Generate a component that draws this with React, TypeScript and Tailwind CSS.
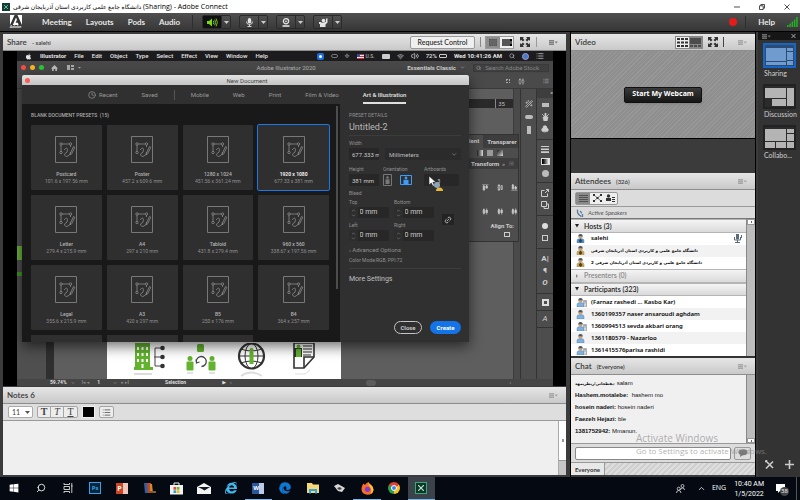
import type { ReactNode } from 'react'
import { clsx } from 'clsx'
import {
  AlignCenterHorizontal,
  AlignEndHorizontal,
  AlignStartHorizontal,
  AlignHorizontalDistributeCenter,
  ChevronDown,
  ChevronUp,
  Clock,
  Club,
  Link2,
  List,
  Search,
  Wand2,
  Wifi,
  Volume2,
} from 'lucide-react'
import { FaApple, FaEdge, FaInternetExplorer, FaWindows } from 'react-icons/fa'

type Preset = { name: string; size: string; selected?: boolean }

const PRESETS: Preset[] = [
  { name: 'Postcard', size: '101.6 x 197.56 mm' },
  { name: 'Poster', size: '457.2 x 609.6 mm' },
  { name: '1280 x 1024', size: '451.56 x 361.24 mm' },
  { name: '1920 x 1080', size: '677.33 x 381 mm', selected: true },
  { name: 'Letter', size: '279.4 x 215.9 mm' },
  { name: 'A4', size: '297 x 210 mm' },
  { name: 'Tabloid', size: '431.8 x 279.4 mm' },
  { name: '960 x 560', size: '338.67 x 197.56 mm' },
  { name: 'Legal', size: '355.6 x 215.9 mm' },
  { name: 'A3', size: '420 x 297 mm' },
  { name: 'B5', size: '250 x 176 mm' },
  { name: 'B4', size: '364 x 257 mm' },
]

const HOSTS = [
  { name: 'salehi', mic: true },
  { name: 'دانشگاه جامع علمی و کاربردی استان آذربایجان شرقی', rtl: true },
  { name: 'دانشگاه جامع علمی و کاربردی استان آذربایجان شرقی 2', rtl: true },
]

const PARTICIPANTS = [
  { name: '(Farnaz rashedi ... Kasbo Kar)', phone: true },
  { name: '1360199357 naser ansaroudi aghdam', phone: false },
  { name: '1360994513 sevda akbari orang', phone: true },
  { name: '1361180579 - Nazarloo', phone: false },
  { name: '1361415576parisa rashidi', phone: true },
]

const CHAT = [
  { from: 'یقطجانی/ریطریمهد:', text: 'salam', rtl: true },
  { from: 'Hashem.motalebe:', text: ' hashem mo' },
  { from: 'hosein naderi:', text: 'hosein naderi' },
  { from: 'Faezeh Hejazi:', text: 'ble' },
  { from: '1381752942:', text: 'Mmanun.' },
]

/* ---------- small shared pieces ---------- */

function PodMenu({ faint }: { faint?: boolean }) {
  return (
    <button aria-label="Pod options" className={clsx('shrink-0', faint ? 'opacity-50' : 'opacity-90')}>
      <svg width="9" height="5" viewBox="0 0 9 5" fill="#777">
        <path d="M0 0h5v5H0z" opacity=".6" />
        <path d="M0 0h5v1H0zM0 2h5v1H0zM0 4h5v1H0zM5.500 1.500h3.500L7.200 3.500z" />
      </svg>
    </button>
  )
}

function PodHeader({ title, note, children, faint }: { title: string; note?: string; children?: ReactNode; faint?: boolean }) {
  return (
    <header className="flex h-[17px] shrink-0 items-center border-b border-[#8d8d8d] bg-linear-to-b from-[#e6e6e6] to-[#c9c9c9] pr-2 pl-1">
      <h2 className="text-[8px] font-semibold text-[#3a3a3a]">{title}</h2>
      {note && <span className="ml-[5px] text-[6px] font-semibold text-[#3a3a3a]">{note}</span>}
      <div className="ml-auto flex items-center">
        {children}
        <PodMenu faint={faint} />
      </div>
    </header>
  )
}

function FullscreenIcon() {
  return (
    <svg width="10" height="10" viewBox="0 0 10 10" fill="#333">
      <path d="M0 0h4L2.8 1.2 4.5 2.9 2.9 4.5 1.2 2.8 0 4zM10 0v4L8.800 2.8 7.100 4.5 5.500 2.900 7.200 1.200 6 0zM0 10V6l1.200 1.200L2.900 5.500 4.500 7.100 2.800 8.800 4 10zM10 10H6l1.200-1.200L5.500 7.100 7.100 5.500 8.800 7.200 10 6z" />
    </svg>
  )
}

function Person({ color, badge, phone }: { color: string; badge?: string; phone?: boolean }) {
  return (
    <svg width="11" height="9" viewBox="0 0 11 9" className="shrink-0">
      <circle cx="4.500" cy="2.500" r="2.200" fill="#c9a37c" />
      <path d="M2.300 2.200a2.200 2.200 0 0 1 4.400 0z" fill="#4c5866" />
      <path d="M1 9V6.500Q1 5 3 4.800h3Q8 5 8 6.500V9z" fill={color} stroke="#4a6d93" strokeWidth=".4" />
      {badge && <path d="M4.500 4.500 6.500 7 4.500 9 2.500 7z" fill={badge} />}
      {phone && <path d="M7.500 2.500h3V9h-3zM8 3.500h2M8 5h2" fill="#cfd6dd" stroke="#6c7885" strokeWidth=".5" />}
    </svg>
  )
}

/* ---------- Connect title bar and menu ---------- */

function TitleBar() {
  return (
    <div className="flex h-[13px] shrink-0 items-center bg-white pl-0.5 text-[7px] text-black">
      <span className="grid size-2 place-items-center bg-[#103d33]">
        <svg width="6" height="6" viewBox="0 0 6 6" stroke="#8fd0b6" strokeWidth=".8">
          <path d="M1 1l4 4M5 1L1 5" />
        </svg>
      </span>
      <h1 className="ml-[3px] whitespace-nowrap">
        <span className="text-[6px]">دانشگاه جامع علمی کاربردی استان آذربایجان شرقی</span>
        <span className="font-['Open_Sans',sans-serif]"> (Sharing) - Adobe Connect</span>
      </h1>
      <div className="ml-auto flex gap-[19px] pr-[10px]">
        <button aria-label="Minimize">
          <svg width="6" height="6" viewBox="0 0 6 6" stroke="#222" strokeWidth=".8"><path d="M0 3h6" /></svg>
        </button>
        <button aria-label="Restore">
          <svg width="6" height="6" viewBox="0 0 6 6" fill="none" stroke="#222" strokeWidth=".8"><path d="M.5 1.800h3.700v3.700H.5zM1.800 1.800V.5h3.700v3.700H4.200" /></svg>
        </button>
        <button aria-label="Close window">
          <svg width="6" height="6" viewBox="0 0 6 6" stroke="#222" strokeWidth=".8"><path d="M.5.5l5 5M5.500.5l-5 5" /></svg>
        </button>
      </div>
    </div>
  )
}

function DeviceButton({ label, active, children }: { label: string; active?: boolean; children: ReactNode }) {
  return (
    <div className="flex h-[14px] rounded-xs border border-[#2b2b2b] bg-linear-to-b from-[#505050] to-[#3a3a3a]">
      <button aria-label={label} className={clsx('grid w-[18px] place-items-center', active && 'bg-[#111]')}>
        {children}
      </button>
      <button aria-label={`${label} options`} className="grid w-[9px] place-items-center border-l border-[#2b2b2b]">
        <svg width="5" height="3" viewBox="0 0 5 3" fill="#ccc"><path d="M0 0h5L2.500 3z" /></svg>
      </button>
    </div>
  )
}

function ConnectMenu() {
  return (
    <nav className="flex h-[19px] shrink-0 items-center border-b border-black bg-linear-to-b from-[#505050] to-[#363636] pr-0.5 text-[8px] font-bold text-[#e6e6e6]">
      <div className="flex w-[31px] flex-col items-center">
        <svg width="12" height="10" viewBox="0 0 12 10">
          <path d="M0 0h12v10H0z" fill="#fff" />
          <path d="M4.600 0h2.800L12 10H8.700L7.800 7.800H5.600L7 4.800l-1-2.400L2.800 10H0z" fill="#333" />
        </svg>
        <span className="text-[4px] leading-[4px]">Adobe</span>
      </div>
      <div className="flex gap-[14px] pl-[11px]">
        <button>Meeting</button>
        <button>Layouts</button>
        <button>Pods</button>
        <button>Audio</button>
      </div>
      <div className="ml-3 flex gap-2 border-l border-[#2e2e2e] pl-[9px]">
        <DeviceButton label="Speaker" active>
          <svg width="11" height="9" viewBox="0 0 11 9" fill="none" stroke="#7bd41f" strokeWidth=".9">
            <path d="M0 3h2l3-2.500v8L2 6H0z" fill="#7bd41f" stroke="none" />
            <path d="M6.300 2.800q1 1.700 0 3.400M7.700 1.700q1.800 2.800 0 5.600M9.100.6q2.600 3.900 0 7.800" />
          </svg>
        </DeviceButton>
        <DeviceButton label="Microphone">
          <svg width="7" height="9" viewBox="0 0 7 9" fill="#e4e4e4">
            <rect x="1.800" y="0" width="3.400" height="5.500" rx="1.700" />
            <path d="M.5 3.500Q.5 6.500 3.500 6.500T6.500 3.500M3.500 6.500V8M1.500 8.500h4" fill="none" stroke="#e4e4e4" strokeWidth=".9" />
          </svg>
        </DeviceButton>
        <DeviceButton label="Webcam">
          <svg width="8" height="9" viewBox="0 0 8 9" fill="none" stroke="#e4e4e4">
            <circle cx="4" cy="3.300" r="2.600" strokeWidth="1.300" />
            <circle cx="4" cy="3.300" r=".9" fill="#e4e4e4" stroke="none" />
            <path d="M.5 8h7" strokeWidth="1.600" />
          </svg>
        </DeviceButton>
        <DeviceButton label="Set status">
          <svg width="9" height="9" viewBox="0 0 9 9" fill="#e4e4e4">
            <circle cx="4.500" cy="2.500" r="1.800" />
            <path d="M1 9V5.500Q1 4.600 2 4.600h3L7 3.500V.5h1.500v4L6.500 6.500V9zM0 4h2v2H0z" />
          </svg>
        </DeviceButton>
      </div>
      <div className="ml-auto flex items-center">
        <span className="size-2 rounded-full bg-[#e51c1c]" />
        <span className="mx-2 h-3 border-l border-[#2e2e2e]" />
        <button className="mr-3 ml-1">Help</button>
        <svg width="11" height="10" viewBox="0 0 11 10" fill="#22b422">
          <path d="M0 8h1.500v2H0zM2.300 6.500h1.500V10H2.300zM4.600 4.500h1.500V10H4.600zM6.900 2.500h1.500V10H6.900zM9.200 0h1.500v10H9.200z" />
        </svg>
      </div>
    </nav>
  )
}

/* ---------- shared screen: Illustrator ---------- */

function MacMenuBar() {
  return (
    <div className="flex h-[10px] shrink-0 items-center bg-[#1c1c1e] pr-[9px] pl-2 text-[6px] leading-[10px] font-medium whitespace-nowrap text-[#e2e2e2]">
      <FaApple size={7} />
      <div className="ml-2 flex gap-2">
        <span className="font-bold">Illustrator</span>
        {['File', 'Edit', 'Object', 'Type', 'Select', 'Effect', 'View', 'Window', 'Help'].map((m) => (
          <span key={m}>{m}</span>
        ))}
      </div>
      <div className="ml-auto flex items-center gap-[7px]">
        <span className="grid size-[7px] place-items-center rounded-xs bg-[#1a6fe0]">
          <span className="size-[3px] rounded-full bg-white" />
        </span>
        <span className="h-1 w-[7px] rounded-full border border-[#777]" />
        <span className="text-[#888]">✥</span>
        <span className="flex items-center gap-0.5 text-[5px] text-[#aaa]">
          <svg width="7" height="5" viewBox="0 0 7 5">
            <path d="M0 0h7v5H0z" fill="#eee" />
            <path d="M0 .5h7M0 2.500h7M0 4.500h7" stroke="#d5303e" />
            <path d="M0 0h3v3H0z" fill="#3b4c9c" />
          </svg>
          U.S.
        </span>
        <span className="h-[5px] w-2 rounded-[1px] bg-[#ccc]" />
        <Wifi size={7} />
        <Volume2 size={8} />
        <span className="flex items-center gap-0.5">
          72%
          <span className="h-1 w-2 rounded-[1px] border border-[#ccc]" />
        </span>
        <span className="font-bold">Wed 10:41:26 AM</span>
        <Search size={6} />
        <span className="size-[7px] rounded-full border border-[#b58fd8] bg-[#3f7fc4]" />
        <List size={8} />
      </div>
    </div>
  )
}

function TrafficLights() {
  return (
    <div className="flex gap-1">
      <span className="size-[5px] rounded-full bg-[#fc4b45]" />
      <span className="size-[5px] rounded-full bg-[#fdb524]" />
      <span className="size-[5px] rounded-full bg-[#2ac833]" />
    </div>
  )
}

function AppBar() {
  return (
    <div className="flex h-[13px] shrink-0 items-center bg-[#484848] px-1 text-[6px] text-[#b5b5b5]">
      <TrafficLights />
      <svg width="7" height="6" viewBox="0 0 7 6" fill="#bbb" className="ml-[7px]"><path d="M3.500 0 7 3.500H6V6H4.300V4H2.700v2H1V3.500H0z" /></svg>
      <svg width="14" height="5" viewBox="0 0 14 5" fill="#aaa" className="ml-[9px]"><path d="M0 0h3v5H0zM4 0h3v2H4zM4 3h3v2H4zM11 2h3l-1.500 1.500z" /></svg>
      <span className="mx-auto pl-[84px]">Adobe Illustrator 2020</span>
      <button className="flex items-center gap-1 font-bold text-[#d2d2d2]">
        Essentials Classic <ChevronDown size={5} />
      </button>
      <label className="ml-2 flex h-2 w-[76px] items-center gap-1 border border-[#3a3a3a] bg-[#404040] px-0.5">
        <Search size={6} />
        <input aria-label="Search Adobe Stock" placeholder="Search Adobe Stock" className="w-full min-w-0 bg-transparent text-[6px] placeholder:text-[#858585]" />
      </label>
    </div>
  )
}

function ArtworkIcons() {
  return (
    <div className="flex items-start gap-5 pt-px pl-[27px]">
      <svg width="31" height="36" viewBox="0 0 31 36">
        <path d="M1 0h15v24h3v3H0v-3h1z" fill="#63b32e" />
        <path d="M3 4h2v3H3zM7.500 4h2v3h-2zM12 4h2v3h-2zM3 10h2v3H3zM7.500 10h2v3h-2zM12 10h2v3h-2zM3 16h2v3H3zM7.500 16h2v3h-2zM12 16h2v3h-2zM7.500 21h2v4h-2z" fill="#fff" />
        <path d="M20 14h8M28 5h-7v18h7" fill="none" stroke="#444" />
        <circle cx="28.500" cy="5" r="2.300" fill="#333" /><circle cx="28.500" cy="14" r="2.300" fill="#333" /><circle cx="28.500" cy="23" r="2.300" fill="#333" />
        <path d="M0 30h18v2H0z" fill="#ddd" />
      </svg>
      <svg width="31" height="36" viewBox="0 0 31 36">
        <g fill="#63b32e">
          <rect x="12" y="1" width="7" height="8" rx="1.500" />
          <circle cx="5" cy="15.500" r="2.500" /><rect x="1.500" y="18.500" width="7" height="9" rx="1" />
          <circle cx="27" cy="15.500" r="2.500" /><rect x="23.500" y="18.500" width="7" height="9" rx="1" />
        </g>
        <path d="M11.500 20a5 5 0 1 1 5 3.500M11 16.500l.5 3.500 3-1" fill="none" stroke="#444" strokeWidth="1.300" />
        <path d="M2 29h6v2H2zM24 29h6v2h-6z" fill="#e2e2e2" />
      </svg>
      <svg width="31" height="36" viewBox="0 0 31 36" fill="none" stroke="#333">
        <circle cx="15.500" cy="13" r="12.500" strokeWidth="2.200" />
        <ellipse cx="15.500" cy="13" rx="6.500" ry="12.500" />
        <path d="M3 13h25M5 6q10 4 21 0M5 20q10-4 21 0" />
        <path d="M13.500 9h4v12h-4z" fill="#63b32e" stroke="none" />
        <circle cx="15.500" cy="7" r="2" fill="#63b32e" stroke="none" />
        <path d="M5 33q10-7 21 0" stroke="#ddd" strokeWidth="2" />
      </svg>
      <svg width="31" height="36" viewBox="0 0 31 36">
        <path d="M7 0h20v14L17 25H7z" fill="#fff" stroke="#333" strokeWidth="1.600" />
        <path d="M17 25V14h10" fill="none" stroke="#333" strokeWidth="1.600" />
        <path d="M16 3h9M16 6h9M16 9h9M16 12h8" stroke="#333" strokeWidth="1.200" />
        <path d="M7 5h8v9H7z" fill="#333" /><path d="M9 6h5v8H9z" fill="#63b32e" /><circle cx="11.500" cy="3.500" r="2" fill="#63b32e" />
        <path d="M8 31h10l5-4" stroke="#ddd" fill="none" />
      </svg>
    </div>
  )
}

function TransformPanel() {
  return (
    <div className="flex flex-col border border-[#333] bg-[#4d4d4d] text-[6px] font-bold text-[#ccc]">
      <div className="flex h-[13px] items-center bg-[#3d3d3d]">
        <span className="self-stretch bg-[#4d4d4d] pr-1 pl-[5px] leading-[12px]">ient</span>
        <span className="pl-1">Transparer</span>
      </div>
      <div className="flex h-[10px] items-center gap-1 pl-[13px]">
        <span className="size-[6px] bg-linear-to-r from-[#222] to-[#ddd]" />
        <span className="size-[6px] bg-[#999]" />
        <span className="size-[6px] bg-linear-to-br from-[#222] to-[#ddd]" />
      </div>
      <div className="flex h-[11px] items-center justify-between bg-[#3d3d3d] pr-1 pl-[7px]">
        Transform
        <span className="flex items-center gap-1 text-[#999]">» <List size={5} /></span>
      </div>
      <div className="flex h-[22px] items-end gap-2 pl-[18px]">
        <AlignStartHorizontal size={7} fill="currentColor" />
        <AlignCenterHorizontal size={7} fill="currentColor" />
        <AlignEndHorizontal size={7} fill="currentColor" />
      </div>
      <div className="flex h-[24px] items-end gap-2 pl-[18px]">
        <AlignHorizontalDistributeCenter size={7} fill="currentColor" />
        <AlignHorizontalDistributeCenter size={7} fill="currentColor" />
        <AlignHorizontalDistributeCenter size={7} fill="currentColor" />
      </div>
      <div className="flex h-[26px] flex-col items-end gap-0.5 pt-[7px] pr-1 leading-[8px]">
        Align To:
        <span className="mr-1 h-[5px] w-[6px] shrink-0 border border-[#ccc]" />
      </div>
    </div>
  )
}

function ToolStrip() {
  const cell = 'grid h-3 place-items-center'
  return (
    <div className="flex w-[17px] shrink-0 flex-col border-l border-[#333] bg-[#4d4d4d] text-[8px] leading-none text-[#cfcfcf]">
      <span className="h-[9px] bg-[#3e3e3e] text-right text-[6px]">«</span>
      <div className="flex flex-col border-b border-[#333] pt-px pb-1">
        <span className={cell}><span className="h-1 w-[7px] bg-[#bbb]" /></span>
        <span className={cell}><svg width="7" height="8" viewBox="0 0 7 8" fill="#ccc"><path d="M1 4h5L5 8H2zM3 0h1v4H3zM0 1l3 3M7 1 4 4" stroke="#ccc" strokeWidth=".8" /></svg></span>
        <span className={cell}><Club size={8} fill="currentColor" /></span>
      </div>
      <div className="flex flex-col border-b border-[#333] py-[3px]">
        <span className={cell}><svg width="8" height="7" viewBox="0 0 8 7" fill="#ccc"><path d="M0 0h8v1H0zM0 2.500h8V4H0zM0 5.200h8V7H0z" /></svg></span>
        <span className={cell}><span className="h-[7px] w-[9px] border border-[#ddd] bg-linear-to-r from-black to-white" /></span>
        <span className={cell}><span className="size-[7px] rounded-full bg-[#bbb]" /></span>
      </div>
      <div className="flex flex-col border-b border-[#333] py-1">
        <span className={cell}><svg width="8" height="8" viewBox="0 0 8 8" fill="none" stroke="#ccc"><path d="M3.500 1.500h-3v6h6v-3M4 4l3.500-3.500M5 .5h2.500V3" /></svg></span>
        <span className={cell}><svg width="8" height="8" viewBox="0 0 8 8" fill="none" stroke="#ccc"><path d="M.5.5h5v5h-5zM3 5.500v2h4.500V3h-2" /></svg></span>
      </div>
      <div className="flex flex-col border-b border-[#333] py-1">
        <span className={cell}><span className="size-[6px] rounded-full bg-[#ddd]" /></span>
        <span className={cell}><span className="size-[6px] border border-[#ccc]" /></span>
      </div>
      <div className="flex flex-col border-b border-[#333] py-1 font-bold">
        <span className={cell}>A|</span>
        <span className={cell}>¶</span>
        <span className={cell}><i>O</i></span>
      </div>
      <div className="flex flex-col border-b border-[#333] py-0.5">
        <span className={cell}><span className="size-[7px] border-2 border-[#ddd]" /></span>
      </div>
      <div className="flex flex-col border-b border-[#333] py-0.5">
        <span className={cell}><i>A</i></span>
      </div>
    </div>
  )
}

function Workspace() {
  return (
    <div className="flex min-h-0 flex-1 flex-col bg-[#535353]">
      <div className="flex h-[15px] shrink-0 items-center justify-end gap-2 border-b border-[#3a3a3a] bg-[#4a4a4a] pr-1 text-[#bbb]">
        <span className="size-1 border border-dotted border-[#aaa]" />
        <AlignHorizontalDistributeCenter size={7} />
        <List size={6} className="ml-[10px]" />
      </div>
      <div className="flex min-h-0 flex-1">
        <div className="flex w-[29px] shrink-0 flex-col bg-[#4f4f4f] pt-[157px]">
          <span className="h-[14px] w-2 bg-[#6db33f]" />
          <span className="mt-3 h-1 w-[6px] bg-[#3f9a25]" />
        </div>
        <div className="w-2 shrink-0 bg-[#2f2f2f]" />
        <div className="flex min-w-0 flex-1 flex-col bg-[#5e5e5e]">
          <div className="mt-[10px] flex h-[9px] shrink-0 items-center justify-end bg-[#2a2a2a] pr-2 text-[6px] text-[#bbb]">
            <span className="border-l border-[#888] pl-0.5">35</span>
          </div>
          <div className="mt-auto ml-[53px] h-[37px] w-[234px] bg-white">
            <ArtworkIcons />
          </div>
        </div>
        <div className="w-[7px] shrink-0 border-l border-[#3c3c3c] bg-[#4a4a4a]" />
        <div className="flex w-4 shrink-0 flex-col items-center gap-[7px] border-l border-[#333] bg-[#4d4d4d] pt-[11px] text-[#ccc]">
          <Wand2 size={8} />
          <span className="h-1 w-2 rounded-full bg-[#bbb]" />
          <span className="h-2 w-1 bg-[#bbb]" />
        </div>
        <ToolStrip />
      </div>
      <div className="flex h-[7px] shrink-0 items-center bg-[#454545] pl-[33px] text-[5px] font-bold text-[#ddd]">
        <span>59.74%</span>
        <ChevronDown size={4} className="ml-1" />
        <span className="ml-[7px] text-[#888]">I◂ ◂</span>
        <span className="ml-2 w-4">1</span>
        <ChevronDown size={4} />
        <span className="ml-1 text-[#888]">▸ ▸I</span>
        <span className="ml-9">Selection</span>
        <span className="ml-9">▶</span>
        <span className="ml-1 text-[#999]">‹</span>
        <span className="mx-auto h-[6px] w-[10px] rounded-full bg-[#5c5c5c]" />
        <span className="pr-[42px] text-[#999]">›</span>
      </div>
    </div>
  )
}

/* ---------- New Document dialog ---------- */

function PresetCard({ preset }: { preset: Preset }) {
  return (
    <button
      className={clsx(
        'flex h-[65px] flex-col items-center rounded-[1px] bg-[#2f2f2f] pt-[11px] text-[5px] leading-[7px] whitespace-nowrap',
        preset.selected && 'outline outline-[#1a78ea]',
      )}
    >
      <svg width="22" height="27" viewBox="0 0 22 27" fill="none" stroke="#8c8c8c" strokeWidth=".8">
        <path d="M.5.5h21v26H.5z" />
        <path d="M7 8h7M6 9v6.500M15.500 9v2" />
        <circle cx="6" cy="8" r="1.200" /><circle cx="15.500" cy="8" r="1.200" /><circle cx="6" cy="16.500" r="1.200" />
        <path d="M9 14q3-3.500 3.500-.5T9.500 18q.5 3.500 3.500 2t2.500-4M15.500 17l3-6.500 1.300.8-3 6.200-1.500 1.500z" />
      </svg>
      <span className={clsx('mt-[8px]', preset.selected ? 'font-bold text-[#eee]' : 'font-medium text-[#b4b4b4]')}>{preset.name}</span>
      <span className="text-[#8f8f8f]">{preset.size}</span>
    </button>
  )
}

function Stepper({ id, label, value }: { id: string; label: string; value: string }) {
  return (
    <div className="flex w-10 flex-col">
      <label htmlFor={id} className="h-2 leading-2">{label}</label>
      <div className="mt-px flex h-[11px] bg-[#292929] text-[#aaa]">
        <div className="flex w-[11px] flex-col items-center justify-center bg-[#2d2d2d]">
          <ChevronUp size={5} />
          <ChevronDown size={5} />
        </div>
        <input id={id} defaultValue={value} className="w-full min-w-0 bg-[#272727] pl-0.5 text-[7px] text-[#ccc]" />
      </div>
    </div>
  )
}

function PresetDetails() {
  return (
    <form className="flex w-[129px] shrink-0 flex-col bg-[#303030] pt-[7px] pr-2 pb-2 pl-[9px] text-[5px] text-[#909090]">
      <span className="h-2 leading-2">PRESET DETAILS</span>
      <input aria-label="Document name" defaultValue="Untitled-2" className="h-[17px] border-b border-[#3c3c3c] text-[9px] text-[#b8b8b8]" />
      <label htmlFor="width" className="mt-[3px] h-2 leading-2">Width</label>
      <div className="mt-px flex gap-[6px]">
        <input id="width" defaultValue="677.333 m" className="h-3 w-[30px] bg-[#272727] pl-[3px] text-[6px] text-[#ccc]" />
        <div className="flex h-3 w-[76px] items-center bg-[#2b2b2b] pr-1 text-[#aaa]">
          <select aria-label="Units" className="w-full appearance-none pl-1 text-[6px] text-[#bbb]">
            <option>Millimeters</option>
          </select>
          <ChevronDown size={7} />
        </div>
      </div>
      <div className="mt-[5px] flex">
        <div className="flex w-[34px] flex-col">
          <label htmlFor="height" className="h-2 leading-2">Height</label>
          <input id="height" defaultValue="381 mm" className="mt-px h-3 w-[30px] bg-[#272727] pl-[3px] text-[6px] text-[#ccc]" />
        </div>
        <div className="flex w-[41px] flex-col">
          <span className="h-2 leading-2">Orientation</span>
          <div className="mt-px flex gap-2">
            <button type="button" aria-label="Portrait">
              <svg width="9" height="12" viewBox="0 0 9 12" fill="#777"><path d="M.5.5h8v11h-8z" fill="none" stroke="#777" /><circle cx="4.500" cy="3.500" r="1.300" /><path d="M2.500 5.300h4V10h-4z" /></svg>
            </button>
            <button type="button" aria-label="Landscape">
              <svg width="12" height="12" viewBox="0 0 12 12" fill="#3d9bfc"><path d="M.5 1.500h11v9H.5z" fill="none" stroke="#3d9bfc" /><circle cx="6" cy="4" r="1.400" /><path d="M3.500 5.800h5V10h-5z" /></svg>
            </button>
          </div>
        </div>
        <div className="flex w-[35px] flex-col">
          <label htmlFor="artboards" className="h-2 leading-2">Artboards</label>
          <input id="artboards" defaultValue="3" className="mt-px h-3 w-full bg-[#272727] pl-[13px] text-[6px] text-[#ccc]" />
        </div>
      </div>
      <span className="mt-[3px] h-2 leading-2">Bleed</span>
      <div className="mt-px flex items-center gap-2">
        <div className="grid grid-cols-2 gap-x-[5px] gap-y-[3px]">
          <Stepper id="bleed-top" label="Top" value="0 mm" />
          <Stepper id="bleed-bottom" label="Bottom" value="0 mm" />
          <Stepper id="bleed-left" label="Left" value="0 mm" />
          <Stepper id="bleed-right" label="Right" value="0 mm" />
        </div>
        <button type="button" aria-label="Link bleed values" className="grid h-[11px] w-3 place-items-center bg-[#232323] text-[#ddd]">
          <Link2 size={8} className="-rotate-45" />
        </button>
      </div>
      <button type="button" className="mt-[5px] h-2 text-left text-[6px] leading-2">› Advanced Options</button>
      <span className="mt-0.5 h-[13px] border-b border-[#3c3c3c] leading-2">Color Mode:RGB, PPI:72</span>
      <button type="button" className="mt-[6px] self-start text-[7px] leading-[9px] text-[#c0c0c0]">More Settings</button>
      <div className="mt-auto flex justify-end gap-2 text-[6px] font-bold">
        <button type="button" className="h-[13px] w-7 rounded-full border border-[#c4c4c4] text-[#c4c4c4]">Close</button>
        <button type="button" className="h-[13px] w-[31px] rounded-full bg-[#1473e6] text-white">Create</button>
      </div>
    </form>
  )
}

function NewDocumentDialog() {
  return (
    <section aria-label="New Document" className="absolute top-6 left-[5px] flex h-[267px] w-[447px] flex-col rounded-t-xs bg-[#303030] shadow-[0_4px_14px_rgba(0,0,0,0.6)]">
      <div className="flex h-[10px] shrink-0 items-center rounded-t-xs bg-linear-to-b from-[#e2e2e2] to-[#c4c4c4] pr-[5px] pl-[3px]">
        <span className="size-[5px] rounded-full bg-[#fc5b53]" />
        <span className="mx-auto text-[6px] text-[#444]">New Document</span>
      </div>
      <div className="flex h-[19px] shrink-0 items-center gap-6 bg-[#303030] pl-[66px] text-[6px] whitespace-nowrap text-[#9a9a9a]">
        <button className="flex items-center gap-[3px]"><Clock size={8} />Recent</button>
        <button>Saved</button>
        <span className="-mx-2 h-[10px] border-l border-[#555]" />
        <button>Mobile</button>
        <button>Web</button>
        <button>Print</button>
        <button>Film &amp; Video</button>
        <button className="h-full border-b-2 border-[#e0e0e0] pt-0.5 font-medium text-[#e4e4e4]">Art &amp; Illustration</button>
      </div>
      <div className="flex min-h-0 flex-1">
        <div className="flex min-w-0 flex-1 bg-[#191919]">
          <div className="flex min-w-0 flex-1 flex-col overflow-hidden pr-px pl-[9px]">
            <h3 className="mt-[7px] mb-[6px] h-2 text-[5px] leading-2 font-medium text-[#aaa]">BLANK DOCUMENT PRESETS &nbsp;(15)</h3>
            <div className="grid grid-cols-4 gap-[5px]">
              {PRESETS.map((p) => (
                <PresetCard key={p.name} preset={p} />
              ))}
              {[0, 1, 2].map((i) => (
                <div key={i} className="h-3 bg-[#2f2f2f]" />
              ))}
            </div>
          </div>
          <div className="ml-[6px] w-1 pt-0.5 pr-0.5"><div className="h-[183px] bg-[#4d4d4d]" /></div>
        </div>
        <PresetDetails />
      </div>
    </section>
  )
}

function SharedScreen() {
  return (
    <div className="flex min-h-0 flex-1 bg-black pr-[13px] pl-[14px] font-['Roboto','DejaVu_Sans',sans-serif]">
      <div className="relative flex min-w-0 flex-1 flex-col overflow-hidden">
        <MacMenuBar />
        <AppBar />
        <Workspace />
        <div className="absolute top-[83px] right-[34px] w-[56px]"><TransformPanel /></div>
        <NewDocumentDialog />
        {/* remote pointer of the presenter */}
        <svg width="16" height="18" viewBox="0 0 16 18" className="absolute top-[124px] left-[411px]">
          <path d="M1 1v9l2.300-2 1.600 3.300 1.500-.8L4.900 7.300H8z" fill="#fff" stroke="#222" strokeWidth=".6" />
          <circle cx="9" cy="10" r="3" fill="#8da4b8" />
          <path d="M8 16q0-3.500 3.500-3.500T15 16z" fill="#e6b93c" />
        </svg>
      </div>
    </div>
  )
}

/* ---------- pods ---------- */

function SharePod() {
  return (
    <section className="flex min-h-0 flex-1 flex-col">
      <PodHeader title="Share" note="- salehi">
        <button className="mr-[5px] h-[13px] w-[65px] rounded-xs border border-[#999] bg-[#efefef] text-[7px] font-medium text-[#222]">Request Control</button>
        <span className="mr-1 h-[10px] border-l border-[#888]" />
        <div className="flex h-[13px] items-center border border-[#999] bg-[#eee]">
          <button aria-label="Fit" className="grid h-full w-[14px] place-items-center bg-[#8e8e8e]"><span className="h-[7px] w-2 border border-dotted border-[#555] bg-[#666]" /></button>
          <button aria-label="Actual size" className="grid w-[13px] place-items-center"><span className="h-[7px] w-[10px] border-r-2 border-dotted border-black bg-[#555]" /></button>
        </div>
        <button aria-label="Full screen" className="mx-[6px]"><FullscreenIcon /></button>
        <span className="mr-3 h-[10px] border-l border-[#999]" />
      </PodHeader>
      <SharedScreen />
    </section>
  )
}

function NotesPod() {
  const format = 'grid w-[13px] place-items-center border-r border-[#a5a5a5] font-["Liberation_Serif",serif] text-[10px] leading-none last:border-r-0'
  return (
    <section className="flex shrink-0 flex-col bg-[#efefef]">
      <PodHeader title="Notes 6" faint />
      <div className="flex h-[17px] items-center gap-1 border-b border-[#999] bg-[#dedede] pl-[5px] text-[#444]">
        <div className="relative flex h-3 w-[25px] items-center rounded-xs border border-[#aaa] bg-white">
          <select aria-label="Font size" className="w-full appearance-none pl-[3px] text-[7px]">
            <option>11</option>
          </select>
          <svg width="5" height="3" viewBox="0 0 5 3" fill="#555" className="mr-0.5 shrink-0"><path d="M0 0h5L2.500 3z" /></svg>
        </div>
        <div className="flex h-3 rounded-xs border border-[#a5a5a5] bg-[#ededed]">
          <button aria-label="Bold" className={clsx(format, 'font-bold')}>T</button>
          <button aria-label="Italic" className={clsx(format, 'italic')}>T</button>
          <button aria-label="Underline" className={clsx(format, 'underline')}>T</button>
        </div>
        <button aria-label="Text color" className="h-3 w-[13px] border border-[#eee] bg-black" />
        <button aria-label="Bullets" className="grid h-3 w-[15px] place-items-center rounded-xs border border-[#a5a5a5] bg-[#ededed]"><List size={9} /></button>
      </div>
      <div className="flex h-[54px]">
        <textarea aria-label="Notes" className="min-w-0 flex-1 resize-none" />
        <div className="w-2 border-l border-[#aaa] bg-[#c6c6c6]">
          <div className="grid h-10 place-items-center border-b border-[#999] bg-white"><span className="h-[3px] w-0.5 bg-[#999]" /></div>
        </div>
      </div>
    </section>
  )
}

function VideoPod() {
  return (
    <section className="flex shrink-0 flex-col border-b border-black">
      <PodHeader title="Video" faint>
        <div className="flex h-[13px] border border-[#888] bg-[#eee]">
          <button aria-label="Grid view" className="grid w-[13px] place-items-center">
            <svg width="11" height="9" viewBox="0 0 11 9" fill="#333"><path d="M0 0h3v2H0zM4 0h3v2H4zM8 0h3v2H8zM0 3.500h3v2H0zM4 3.500h3v2H4zM8 3.500h3v2H8zM0 7h3v2H0zM4 7h3v2H4zM8 7h3v2H8z" /></svg>
          </button>
          <button aria-label="Filmstrip view" className="grid w-[13px] place-items-center bg-[#888]">
            <svg width="11" height="9" viewBox="0 0 11 9" fill="#4c4c4c"><path d="M0 0h11v6H0zM0 7h3v2H0zM4 7h3v2H4zM8 7h3v2H8z" /></svg>
          </button>
        </div>
        <button aria-label="Full screen" className="mx-[5px]"><FullscreenIcon /></button>
        <span className="mr-[14px] h-[10px] border-l border-[#444]" />
      </PodHeader>
      <div className="grid h-[87px] place-items-center bg-[repeating-linear-gradient(135deg,#8f8f8f_0px,#8f8f8f_2px,#989898_2px,#989898_3px)]">
        <button className="h-4 w-[78px] rounded-xs border border-[#111] bg-linear-to-b from-[#3a3a3a] to-[#161616] font-['Noto_Sans',sans-serif] text-[7px] font-bold whitespace-nowrap text-white shadow">Start My Webcam</button>
      </div>
    </section>
  )
}

function GroupHeader({ title, closed }: { title: string; closed?: boolean }) {
  return (
    <button className={clsx('flex flex-1 items-center gap-[5px] border-y border-[#b5b5b5] bg-linear-to-b from-[#f4f4f4] to-[#dadada] pl-1 text-[7px]', closed ? 'text-[#888]' : 'font-semibold text-[#222]')}>
      <svg width="4" height="4" viewBox="0 0 4 4" fill="currentColor">{closed ? <path d="M1 0v4l2-2z" /> : <path d="M0 0h4L2 3.500z" />}</svg>
      {title}
    </button>
  )
}

function AttendeesPod() {
  return (
    <section className="flex min-h-0 flex-1 flex-col overflow-hidden bg-[#dcdcdc]">
      <PodHeader title="Attendees" note="(326)" faint />
      <div className="flex h-[17px] shrink-0 items-center border-b border-[#999] pl-1">
        <div className="flex h-[13px] rounded-xs border border-[#999] bg-[#eee] text-[#333]">
          <button aria-label="List view" className="grid w-[14px] place-items-center bg-[#8a8a8a]">
            <svg width="9" height="7" viewBox="0 0 9 7" stroke="#444"><path d="M0 .5h9M0 2.500h9M0 4.500h9M0 6.500h9" strokeWidth=".8" /></svg>
          </button>
          <button aria-label="Breakout view" className="grid w-[14px] place-items-center">
            <svg width="9" height="8" viewBox="0 0 9 8" fill="#333" stroke="#333"><path d="M0 0h2v2H0zM7 0h2v2H7zM0 6h2v2H0zM7 6h2v2H7zM3.500 3h2v2h-2z" stroke="none" /><path d="M1 1l7 6M8 1 1 7" strokeWidth=".6" /></svg>
          </button>
          <button aria-label="Status view" className="grid w-[13px] place-items-center">
            <svg width="9" height="8" viewBox="0 0 9 8" fill="#333"><circle cx="2.500" cy="2" r="1.700" /><path d="M0 4h5v3H0zM6 3h3v1H6zM6 5h3v1H6zM6 7h3v1H6z" /></svg>
          </button>
        </div>
      </div>
      <div className="flex h-3 shrink-0 items-center gap-1 border-b border-[#777] pl-[5px] text-[6px] text-[#555] italic">
        <svg width="8" height="8" viewBox="0 0 8 8" fill="none" stroke="#5a7c9c"><path d="M1.500.5v3q1 3 4 4M4 2q1.500 1 1.500 2.500M6.500 5v3" strokeWidth="1.300" /></svg>
        Active Speakers
      </div>
      <div className="flex min-h-0 flex-1">
        <div className="flex min-w-0 flex-1 flex-col bg-white text-[6px] font-semibold whitespace-nowrap text-black">
          <GroupHeader title="Hosts (3)" />
          {HOSTS.map((h, i) => (
            <div key={h.name} className={clsx("flex flex-1 items-center gap-1 overflow-hidden pr-[3px] pl-[5px] font-['Noto_Sans',sans-serif]", i % 2 && 'bg-[#f2f2f2]')}>
              <Person color={h.mic ? '#5c93c9' : '#e0b04a'} badge={h.mic ? '#24466e' : '#5a3c12'} />
              <span className={clsx(h.rtl && "font-['DejaVu_Sans',sans-serif] text-[4px] font-bold")}>{h.name}</span>
              {h.mic && (
                <svg width="10" height="9" viewBox="0 0 10 9" fill="none" stroke="#5b6a78" className="ml-auto"><path d="M3.500 0h2v5h-2z" fill="#5b6a78" /><path d="M1.500 3v3h6V3M4.500 6v3M2 8.500h5M8.500 1v3" /></svg>
              )}
            </div>
          ))}
          <GroupHeader title="Presenters (0)" closed />
          <GroupHeader title="Participants (323)" />
          {PARTICIPANTS.map((p, i) => (
            <div key={p.name} className={clsx("flex flex-1 items-center gap-1 overflow-hidden pl-[5px] font-['Noto_Sans',sans-serif]", i % 2 && 'bg-[#f2f2f2]')}>
              <Person color="#7fb2e2" phone={p.phone} />
              <span>{p.name}</span>
            </div>
          ))}
        </div>
        <div className="w-[9px] border-l border-[#888] bg-[#bdbdbd]">
          <div className="grid h-[6px] place-items-center border border-[#999] bg-white"><span className="h-0.5 w-px bg-[#666]" /></div>
        </div>
      </div>
    </section>
  )
}

function ChatPod() {
  return (
    <section className="flex h-[117px] shrink-0 flex-col bg-[#dcdcdc]">
      <PodHeader title="Chat" note="(Everyone)" faint />
      <div className="flex min-h-0 flex-1 border-b border-[#999] bg-[#f0f0f0]">
        <ul className="flex-1 overflow-hidden pt-[2px] pl-1 font-['Liberation_Sans','DejaVu_Sans',sans-serif] text-[6px] leading-3 whitespace-pre text-[#111]">
          {CHAT.map((m) => (
            <li key={m.from} className="h-3">
              <b className={clsx(m.rtl && 'text-[4px]')}>{m.from}</b> {m.text}
            </li>
          ))}
        </ul>
        <div className="flex w-[9px] flex-col justify-end border-l border-[#888] bg-[#bdbdbd]">
          <div className="grid h-[5px] place-items-center border border-[#999] bg-white"><span className="h-0.5 w-px bg-[#666]" /></div>
        </div>
      </div>
      <div className="flex h-[18px] shrink-0 items-center gap-[3px] pr-1 pl-1">
        <input aria-label="Chat message" className="h-[13px] min-w-0 flex-1 rounded-xs border border-[#888] bg-white" />
        <button aria-label="Send" className="grid h-[13px] w-[17px] place-items-center rounded-xs border border-[#999] bg-[#ddd]">
          <svg width="10" height="8" viewBox="0 0 10 8" fill="#777"><ellipse cx="5" cy="3.200" rx="4.500" ry="3" /><path d="M2.500 5 2 8l3-2z" /></svg>
        </button>
      </div>
      <div className="flex h-[13px] shrink-0 border-t border-[#999] bg-[repeating-linear-gradient(135deg,#cfcfcf_0px,#cfcfcf_2px,#dedede_2px,#dedede_4px)]">
        <button className="w-[34px] border-r border-[#999] bg-[#e8e8e8] text-[6px] font-bold text-[#333]">Everyone</button>
      </div>
    </section>
  )
}

/* ---------- layout strip on the right ---------- */

function LayoutThumb({ label, active, d }: { label: string; active?: boolean; d: string }) {
  return (
    <button className="flex w-[33px] flex-col text-left text-[7px] leading-[9px] whitespace-nowrap text-[#cfcfcf]">
      <svg width="33" height="25" viewBox="0 0 33 25">
        <path d="M1 1h31v23H1z" fill={active ? '#2d4a70' : '#2b2b2b'} stroke={active ? '#1666c8' : '#222'} strokeWidth="2" />
        <path d={d} fill={active ? '#6f9bce' : '#b4b4b4'} />
      </svg>
      <span className="mt-px pl-px">{label}</span>
    </button>
  )
}

function LayoutBar() {
  return (
    <aside className="flex w-[42px] shrink-0 flex-col bg-[#333]">
      <div className="flex h-2 items-center justify-between bg-[#161616] px-1">
        <PodMenu />
        <svg width="5" height="4" viewBox="0 0 5 4" stroke="#aaa"><path d="M.5 0l4 4M4.500 0l-4 4" /></svg>
      </div>
      <div className="flex flex-col gap-[6px] pt-[3px] pl-[5px]">
        <LayoutThumb active label="Sharing" d="M3 5h20v13H3zM24 5h6v3h-6zM24 9h6v8h-6zM24 18h6v4h-6zM3 19h20v3H3z" />
        <LayoutThumb label="Discussion" d="M2 4h21v10H2zM24 4h7v18h-7zM9 15h14v7H9z" />
        <LayoutThumb label="Collabo..." d="M2 4h21v12H2zM24 4h7v4h-7zM24 9h7v7h-7zM2 17h10v6H2zM13 17h10v6H13zM24 17h7v6h-7z" />
      </div>
      <div className="mt-auto flex items-center gap-[11px] pb-2 pl-[7px]">
        <button aria-label="Edit layouts">
          <svg width="9" height="9" viewBox="0 0 9 9" stroke="#ccc" strokeWidth="1.600"><path d="M1 8.500l7-7M1 1l7 7M0 2l2-2" /></svg>
        </button>
        <button aria-label="Add layout">
          <svg width="9" height="9" viewBox="0 0 9 9" stroke="#ccc" strokeWidth="1.600"><path d="M4.500 0v9M0 4.500h9" /></svg>
        </button>
      </div>
    </aside>
  )
}

/* ---------- Windows taskbar ---------- */

function TaskItem({ label, running, active, children }: { label: string; running?: boolean; active?: boolean; children: ReactNode }) {
  return (
    <button aria-label={label} className={clsx('grid h-full place-items-center', active && 'bg-[#3b424a]', running ? 'border-b border-[#76b9ed]' : 'border-b border-transparent')}>
      {children}
    </button>
  )
}

function Taskbar() {
  return (
    <footer className="flex h-[23px] shrink-0 items-center bg-[#050a12] font-['Open_Sans',sans-serif] text-white">
      <div className="grid h-full w-[435px] shrink-0 grid-cols-16">
        <TaskItem label="Start"><FaWindows size={10} /></TaskItem>
        <TaskItem label="Search"><Search size={10} className="-scale-x-100" /></TaskItem>
        <TaskItem label="Task view">
          <svg width="10" height="10" viewBox="0 0 10 10" fill="none" stroke="#ddd" strokeWidth=".9"><path d="M1 3.500h5.500v3H1zM1 0v1.500h5.500V0M1 10V8.500h5.500V10M8.800 0v10M8 3h1.600" /></svg>
        </TaskItem>
        <TaskItem label="Photoshop"><span className="grid h-3 w-3 place-items-center border border-[#2fa3f0] bg-[#0a2438] text-[6px] leading-none font-bold text-[#2fa3f0]">Ps</span></TaskItem>
        <TaskItem label="PowerPoint"><span className="flex h-[11px] w-3 items-center bg-linear-to-r from-[#d04424] from-60% to-[#f2c7bb] to-60% pl-px text-[7px] leading-none font-bold">P</span></TaskItem>
        <TaskItem label="WinRAR">
          <svg width="12" height="11" viewBox="0 0 12 11"><path d="M0 0h4l1 10H1z" fill="#365f9e" /><path d="M3 0h4l1 10H4z" fill="#c2452d" /><path d="M6 1h2l1 9H6z" fill="#d28d2b" /><path d="M5 8h7v2H5z" fill="#8a5a2b" /></svg>
        </TaskItem>
        <TaskItem label="Store">
          <svg width="13" height="13" viewBox="0 0 13 13"><path d="M4 4V1h5v3" fill="none" stroke="#eee" /><path d="M0 3h13v9.500H0z" fill="#f2f2f2" /><path d="M3.500 5h2.700v2.700H3.500z" fill="#e04f2f" /><path d="M6.800 5h2.700v2.700H6.800z" fill="#76b82a" /><path d="M3.500 8.300h2.700V11H3.500z" fill="#2ba0dd" /><path d="M6.800 8.300h2.700V11H6.800z" fill="#f5b921" /></svg>
        </TaskItem>
        <TaskItem label="Mail">
          <svg width="14" height="11" viewBox="0 0 14 11"><path d="M0 4l7-4 7 4v7H0z" fill="#f4f4f4" /><path d="M1 4h12L7.500 7.500 5 6z" fill="#14181f" /></svg>
        </TaskItem>
        <TaskItem label="Internet Explorer"><FaInternetExplorer size={12} color="#3fb8ec" /></TaskItem>
        <TaskItem label="Word" running><span className="flex h-[11px] w-3 items-center bg-linear-to-r from-[#2b579a] from-60% to-[#b9cbe8] to-60% pl-px text-[6px] leading-none font-bold">W</span></TaskItem>
        <TaskItem label="Edge"><FaEdge size={12} color="#0b78d4" /></TaskItem>
        <TaskItem label="File Explorer">
          <svg width="12" height="11" viewBox="0 0 12 11"><path d="M0 0h5l1 1.500h6V10H0z" fill="#f8d775" /><path d="M2 6h8v4.500H8V8H4v2.500H2z" fill="#33a3dc" /></svg>
        </TaskItem>
        <TaskItem label="Snipping">
          <svg width="12" height="9" viewBox="0 0 12 9"><path d="M0 2l4-2 7 4-3 4-4-1z" fill="#d8d8d8" /><path d="M3 4l3-1 2 2-3 1z" fill="#444" /></svg>
        </TaskItem>
        <TaskItem label="Firefox" running>
          <svg width="13" height="13" viewBox="0 0 13 13">
            <path d="M1.500 3 2.500 1.500 4 3Q5 .8 7.500 0 8 2 10 3q2.800 2 2.500 5-.8 4.500-6 4.800Q1 12.500.5 7.500.5 5 1.500 3z" fill="#fb6a28" />
            <path d="M7.500 0Q8 2 10 3q2.800 2 2.500 5Q12 11 9.500 12q2-4-.5-7Q7 3.500 7.500 0z" fill="#fdc62f" />
            <circle cx="6.500" cy="7.300" r="2.600" fill="#7a3fd0" />
          </svg>
        </TaskItem>
        <TaskItem label="Chrome">
          <span className="grid size-3 place-items-center rounded-full bg-[conic-gradient(from_-60deg,#e24134_0deg_120deg,#f9c31c_120deg_240deg,#2f9e4b_240deg_360deg)]">
            <span className="size-[6px] rounded-full border border-white bg-[#4285f4]" />
          </span>
        </TaskItem>
        <TaskItem label="Adobe Connect" running active>
          <span className="grid size-3 place-items-center border border-[#35a77c] bg-[#0d3528]">
            <svg width="6" height="6" viewBox="0 0 6 6" stroke="#b9e4d2" strokeWidth="1.200"><path d="M0 0l6 6M6 0L0 6" /></svg>
          </span>
        </TaskItem>
      </div>
      <div className="ml-auto flex h-full items-center text-[7px]">
        <svg width="9" height="9" viewBox="0 0 9 9" fill="none" stroke="#ddd" strokeWidth=".8"><circle cx="6.500" cy="2" r="1.500" /><path d="M4.500 6q0-2 2-2t2 2" /><circle cx="2.700" cy="4.700" r="1.500" /><path d="M.5 9q0-2.500 2.200-2.500T5 9" /></svg>
        <ChevronUp size={9} className="mr-[6px] ml-3" />
        <span>ENG</span>
        <time className="ml-2 text-center font-['Roboto',sans-serif] leading-[10px] whitespace-nowrap">10:40 AM<br />1/5/2022</time>
        <button aria-label="Notifications" className="relative ml-3 h-3 w-3">
          <svg width="9" height="9" viewBox="0 0 9 9" fill="#fff"><path d="M0 0h9v7H4L2 9V7H0z" /></svg>
          <span className="absolute top-1 left-1 grid size-[9px] place-items-center rounded-full bg-[#444] text-[6px] leading-none">38</span>
        </button>
        <span className="ml-2 h-full w-1 border-l border-[#555]" />
      </div>
    </footer>
  )
}

export default function App() {
  return (
    <div className="relative flex h-screen min-h-[500px] w-full flex-col overflow-hidden bg-[#3b3b3b] font-['Lato','DejaVu_Sans',sans-serif]">
      <TitleBar />
      <ConnectMenu />
      <main className="flex min-h-0 flex-1">
        <div className="flex min-w-0 flex-1 flex-col gap-px pt-0.5 pb-0.5 pl-[3px]">
          <SharePod />
          <NotesPod />
        </div>
        <div className="ml-1 flex w-[186px] shrink-0 flex-col border-x border-black pt-0.5 pb-0.5">
          <VideoPod />
          <div className="h-[34px] shrink-0" />
          <AttendeesPod />
          <div className="h-0.5 shrink-0 bg-[#333]" />
          <ChatPod />
        </div>
        <div className="w-0.5 shrink-0" />
        <LayoutBar />
      </main>
      <Taskbar />
      <div className="pointer-events-none absolute right-[33px] bottom-[43px] flex flex-col font-['Open_Sans',sans-serif] whitespace-nowrap text-[#8c8c8c]/70">
        <span className="text-[10px] leading-[14px]">Activate Windows</span>
        <span className="text-[8px] leading-3">Go to Settings to activate Windows.</span>
      </div>
    </div>
  )
}
